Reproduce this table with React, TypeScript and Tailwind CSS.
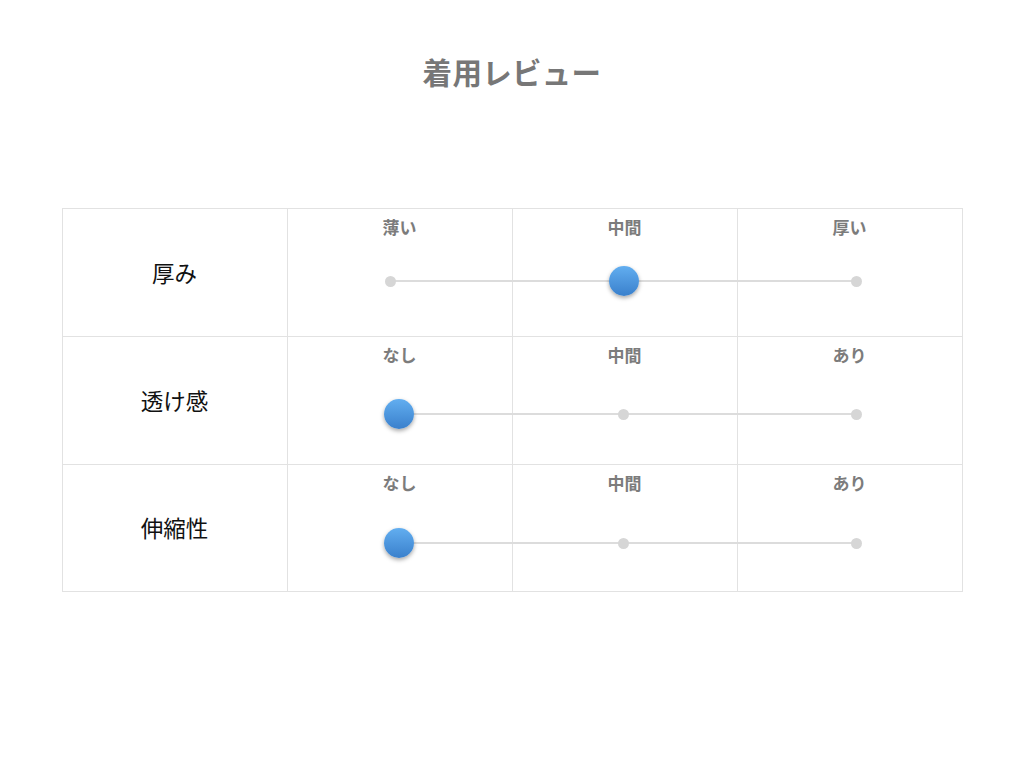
import React from "react";

const rows = [
  { label: "厚み", heads: ["薄い", "中間", "厚い"], value: 1, top: 71, h: "h-[127px]" },
  { label: "透け感", heads: ["なし", "中間", "あり"], value: 0, top: 76, h: "h-[128px]" },
  { label: "伸縮性", heads: ["なし", "中間", "あり"], value: 0, top: 77, h: "h-[127px]" },
];

function Slider({ value, top }: { value: number; top: number }) {
  const dots = [0, 233, 466];
  const knobX = value === 0 ? 8 : dots[value];
  return (
    <div className="absolute left-[104px] w-[466px] h-[2px]" style={{ top }}>
      <div className="absolute left-0 right-0 top-0 h-[2px] bg-[#dcdcdc]" />
      {dots.map((x, i) => (
        <div
          key={i}
          className="absolute w-[11px] h-[11px] rounded-full bg-[#d6d6d6]"
          style={{ left: x - 5.5, top: -4.5 }}
        />
      ))}
      <div
        className="absolute w-[30px] h-[30px] rounded-full bg-gradient-to-b from-[#62aef0] to-[#3a80cc] shadow-[0_2px_4px_rgba(0,0,0,0.35)]"
        style={{ left: knobX - 15, top: -14 }}
      />
    </div>
  );
}

export default function App() {
  return (
    <div
      className="w-[1024px] h-[768px] bg-white flex flex-col items-center"
      style={{ fontFamily: '"Noto Sans CJK JP", "Noto Sans", sans-serif' }}
    >
      <h1 className="mt-[51px] text-[29.5px] leading-[40px] font-bold text-[#777777] tracking-[0.3px]">
        着用レビュー
      </h1>
      <div className="mt-[117px] w-[901px] border border-[#e2e2e2]">
        {rows.map((r, ri) => (
          <div
            key={ri}
            className={`flex ${r.h} ${ri > 0 ? "border-t border-[#e2e2e2]" : ""}`}
          >
            <div className="w-[224px] flex items-center justify-center text-[22.5px] text-[#111]">
              {r.label}
            </div>
            <div className="relative flex-1 grid grid-cols-3">
              {r.heads.map((h, hi) => (
                <div
                  key={hi}
                  className="border-l border-[#e2e2e2] flex justify-center pt-[6px] text-[17px] font-bold text-[#7c7c7c] leading-[24px]"
                >
                  {h}
                </div>
              ))}
              <Slider value={r.value} top={r.top} />
            </div>
          </div>
        ))}
      </div>
    </div>
  );
}
